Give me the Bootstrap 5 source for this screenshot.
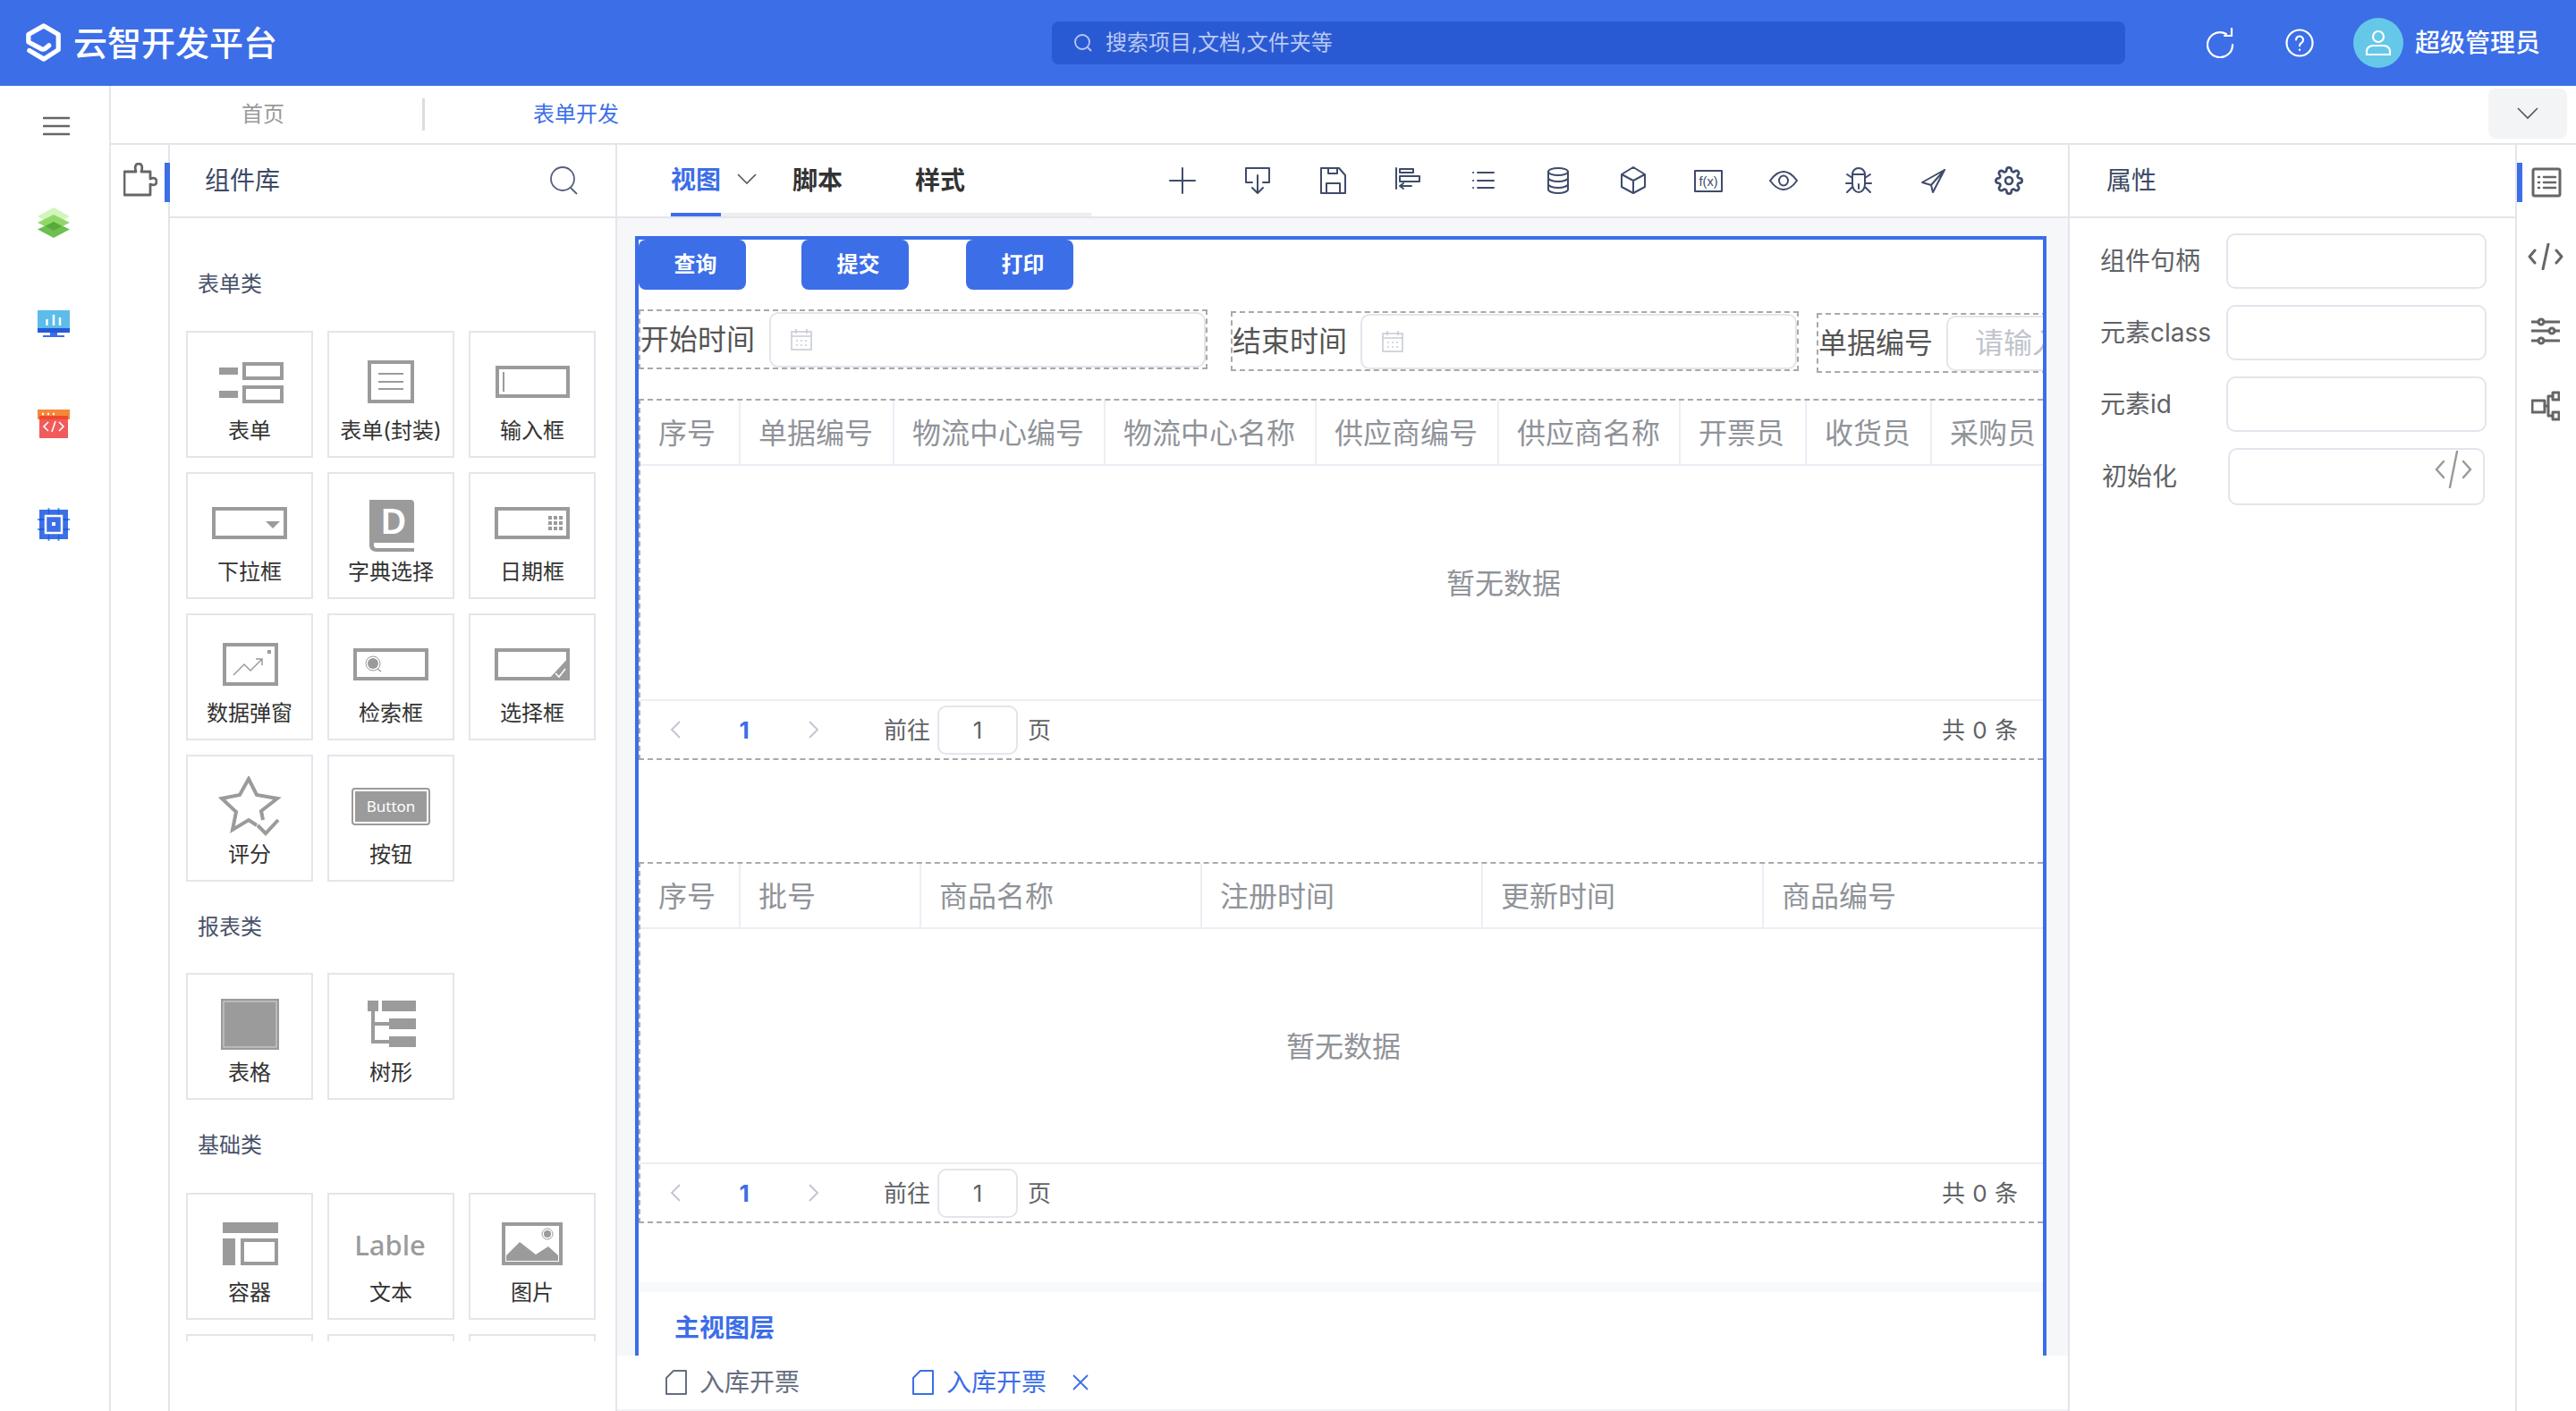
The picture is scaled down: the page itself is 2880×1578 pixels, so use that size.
<!DOCTYPE html>
<html lang="zh-CN">
<head>
<meta charset="utf-8">
<title>云智开发平台</title>
<link href="https://cdn.jsdelivr.net/npm/bootstrap@5.3.0/dist/css/bootstrap.min.css" rel="stylesheet">
<style>
:root{--blue:#3c6ee8;--line:#e4e5ec;--dash:#a9a9a9}
html,body{width:2880px;height:1578px;overflow:hidden}
body{font-family:"Inter","Noto Sans CJK SC",sans-serif;background:#fff;color:#333}
svg{display:block;flex-shrink:0}
.topbar{height:96px;background:var(--blue);color:#fff}
.brand{width:1176px;padding-left:28px}
.brand-txt{font-size:38px;font-weight:500;line-height:44px;margin-left:12px;letter-spacing:0}
.searchbox{width:1200px;height:48px;background:#2a5ad3;border-radius:8px;padding-left:24px;color:#b9c9f2;font-size:24px}
.searchbox span{margin-left:14px}
.top-right{padding-left:91px}
.top-gap{margin-left:56px}
.avatar{width:56px;height:56px;border-radius:50%;background:#65c8e8;margin-left:44px;margin-right:13px}
.uname{font-size:28px;font-weight:500;white-space:nowrap}
.rail{width:124px;border-right:2px solid var(--line);padding-top:34px;padding-left:42px}
.rail svg{margin-bottom:0}
.r1{margin-left:6px}.r2{margin-top:80px}.r3{margin-top:81px}.r4{margin-top:81px}.r5{margin-top:78px}
.tabbar{height:66px;border-bottom:2px solid var(--line);font-size:24px;padding-left:146px;padding-right:10px}
.tab-home{color:#999}
.tab-div{width:3px;height:36px;background:#ddd;margin-left:154px;margin-right:121px}
.tab-cur{color:var(--blue)}
.more-btn{width:88px;height:56px;background:#f3f4f6;border-radius:8px;margin-bottom:2px}
.icon-col{width:66px;border-right:2px solid var(--line);padding-top:20px}
.icon-row{height:44px;width:66px;padding-left:14px;border-right:6px solid var(--blue);margin-right:-2px}
.lib{width:500px;border-right:2px solid var(--line)}
.pane-head{height:82px;border-bottom:2px solid var(--line);font-size:28px;color:#3d4a66;flex-shrink:0}
.lib .pane-head{padding-left:39px;padding-right:42px}
.lib-body{height:1256px;overflow:hidden;padding-left:18px}
.sec-title{font-size:24px;line-height:36px;color:#48526a;padding-left:13px}
.sec-a{margin-top:56px;margin-bottom:34px}
.sec-b{margin-top:33px;margin-bottom:33px}
.sec-c{margin-top:33px;margin-bottom:35px}
.tile-grid{display:grid;grid-template-columns:repeat(3,142px);gap:16px}
.tile{height:142px;border:2px solid var(--line);text-align:center;font-size:24px;line-height:36px;color:#333;overflow:hidden}
.tile svg{margin-top:22px;margin-bottom:2px}
.g{fill:#9b9b9b}
.o{fill:none;stroke:#9b9b9b;stroke-width:4}
.t{fill:none;stroke:#9b9b9b;stroke-width:2}
.workspace{width:1622px}
.toolrow{height:82px;border-bottom:2px solid var(--line);padding-left:60px;padding-right:24px;flex-shrink:0}
.tabtrack{width:470px;height:80px;border-bottom:4px solid #eee;font-size:28px;font-weight:700;color:#333}
.viewtab{width:56px;height:80px;color:var(--blue);border-bottom:4px solid var(--blue);text-align:center;flex-shrink:0}
.viewtab span{display:block;line-height:78px}
.vchev{margin-left:18px;margin-right:40px}
.plain-tab{margin-right:81px;line-height:80px;padding-bottom:4px}
.tool-slot{width:84px;justify-content:center}
.tool-ic{fill:none;stroke:#3f4b6b;stroke-width:2;stroke-linejoin:round;stroke-linecap:round}
.canvas-area{height:1272px;overflow:hidden;background:#f6f7f9;padding:20px 24px 0 20px}
.frame{height:1400px;background:#fff;border:4px solid var(--blue);overflow:hidden}
.act-btn{width:120px;height:56px;padding:0 0 0 7px;background:var(--blue);border:0;border-radius:8px;font-size:24px;font-weight:700;color:#fff;margin-right:62px;flex-shrink:0}
.act-btn:nth-child(2){margin-right:64px}
.field-row{height:122px;padding-top:22px;flex-wrap:nowrap}
.field{height:67px;border:2px dashed var(--dash);flex-shrink:0;font-size:32px;color:#555}
.field label{white-space:nowrap;flex-shrink:0;line-height:40px;padding-left:0}
.f1{width:636px}
.f2{width:635px;margin-left:26px;margin-top:2px}
.f3{width:500px;margin-left:20px;margin-top:4px}
.f-in{height:62px;background:#fff;border:2px solid var(--line);border-radius:10px;padding-left:22px;margin-left:16px;color:#c0c4cc;white-space:nowrap;flex-shrink:0;overflow:hidden}
.f1 .f-in{width:488px;margin-left:16px}
.f2 .f-in{width:488px;margin-left:15px}
.f3 .f-in{width:300px;margin-left:15px;padding-left:30px}
.grid-wrap{border-top:2px dashed var(--dash);border-bottom:2px dashed var(--dash);border-left:2px dashed var(--dash);height:404px;overflow:hidden}
.grid-2{margin-top:114px}
.dtable{table-layout:fixed;margin:0;border-collapse:separate;border-spacing:0;--bs-table-bg:transparent}
.dtable th{height:73px;padding:2px 0 0 20px;font-size:32px;font-weight:400;color:#909399;vertical-align:middle;border-bottom:2px solid #ebeef5;border-right:2px solid #ebeef5;white-space:nowrap;overflow:hidden}
.dtable th:last-child{border-right:0}
.dtable td{height:261px;padding:2px 0 0;font-size:32px;color:#909399;text-align:center;vertical-align:middle;border:0}
.tb1{width:1930px}
.tb1 th:nth-child(1){width:112px}.tb1 th:nth-child(2){width:172px}.tb1 th:nth-child(3),.tb1 th:nth-child(4){width:236px}
.tb1 th:nth-child(5){width:204px}.tb1 th:nth-child(6){width:203px}.tb1 th:nth-child(7){width:141px}.tb1 th:nth-child(8),.tb1 th:nth-child(9){width:140px}
.tb2{width:1568px}
.tb2 td{padding-left:4px}
.tb2 th:nth-child(1){width:112px}.tb2 th:nth-child(2){width:202px}.tb2 th:nth-child(3),.tb2 th:nth-child(4),.tb2 th:nth-child(5){width:314px}
.pager{height:66px;border-top:2px solid #ebeef5;font-size:26px;color:#606266;padding-right:28px}
.p-slot{justify-content:center}
.ps1{width:78px}.ps2{width:76px;color:var(--blue);font-weight:700}.ps3{width:80px}
.pg-txt{margin-left:38px}
.pg-in{width:90px;height:55px;border:2px solid var(--line);border-radius:10px;margin:0 11px 0 8px;text-align:center;line-height:51px}
.pg-total{word-spacing:1px}
.band{height:11px;background:#f8f9fa;margin-top:66px}
.layer-name{font-size:28px;font-weight:700;color:var(--blue);line-height:40px;margin-top:20px;padding-left:40px}
.bottom-tabs{height:62px;background:#fff;border-bottom:2px solid #f2f3f5;padding-left:54px;font-size:28px;color:#666e80;flex-shrink:0}
.bottom-tabs span{margin-left:14px}
.bt-cur{color:var(--blue);margin-left:126px}
.bt-x{margin-left:29px}
.props{width:502px;border-left:2px solid var(--line);border-right:2px solid var(--line)}
.props .pane-head{padding-left:41px}
.prop-body{padding-top:17px;padding-left:34px}
.prop-row{height:62px;margin-bottom:18px;font-size:28px;color:#606266}
.prop-row label{width:141px;flex-shrink:0;white-space:nowrap}
.prop-in{width:291px;height:62px;border:2px solid var(--line);border-radius:10px;padding:0;box-shadow:none}
.prop-last{height:64px;margin-top:0}
.prop-last label{width:143px;padding-left:2px}
.code-box{width:287px;height:64px;border:2px solid var(--line);border-radius:10px;padding:1px 12px 0 0}
.side-tabs{width:66px;padding-top:20px}
.st1{height:44px;border-left:6px solid var(--blue);padding-left:10px}
.st2{margin-top:46px;padding-left:12px}.st3{margin-top:53px;padding-left:16px}.st4{margin-top:50px;padding-left:16px}
.st-ic{fill:none;stroke:#666;stroke-width:3;stroke-linejoin:round;stroke-linecap:round}
</style>
</head>
<body class="d-flex flex-column">
<header class="topbar d-flex align-items-center flex-shrink-0">
  <div class="brand d-flex align-items-center">
    <svg width="42" height="46" viewBox="27 25 44 46" fill="none" stroke="#fff" stroke-width="5.5" stroke-linejoin="round" stroke-linecap="round"><path d="M55 51 L50 55 Q48 56 46 55 L31 47 V38 L49 28 L66 38 V56 L49 67 L32 57"/></svg>
    <span class="brand-txt">云智开发平台</span>
  </div>
  <div class="searchbox d-flex align-items-center">
    <svg width="22" height="22" viewBox="0 0 22 22" fill="none" stroke="#b9c9f2" stroke-width="1.8"><circle cx="10" cy="10" r="8"/><path d="M16 16l4 4"/></svg>
    <span>搜索项目,文档,文件夹等</span>
  </div>
  <div class="top-right d-flex align-items-center">
    <svg width="32" height="34" viewBox="0 0 32 34" fill="none" stroke="#fff" stroke-width="2.2" stroke-linecap="round" stroke-linejoin="round"><path d="M29 19a14 14 0 1 1-7-12"/><path d="M28 1v8h-8"/></svg>
    <svg class="top-gap" width="32" height="32" viewBox="0 0 32 32" fill="none" stroke="#fff" stroke-width="2.2" stroke-linecap="round"><circle cx="16" cy="16" r="14.5"/><path d="M12 12.5a4 4 0 1 1 6 3.5c-1.4.8-2 1.6-2 3.2"/><path d="M16 23.5v.5"/></svg>
    <div class="avatar d-flex align-items-center justify-content-center">
      <svg width="30" height="30" viewBox="0 0 30 30" fill="none" stroke="#fff" stroke-width="2.2"><circle cx="15" cy="8" r="6"/><path d="M2 28v-4c0-3 3-6 7-6h12c4 0 7 3 7 6v4z"/></svg>
    </div>
    <span class="uname">超级管理员</span>
  </div>
</header>

<div class="d-flex flex-grow-1 overflow-hidden">
  <nav class="rail d-flex flex-column flex-shrink-0">
    <svg class="r1" width="30" height="22" viewBox="0 0 30 22" stroke="#666" stroke-width="2.6" stroke-linecap="round"><path d="M1 2h28M1 11h28M1 20h28"/></svg>
    <svg class="r2" width="36" height="34" viewBox="0 0 36 34"><polygon points="18,0 36,10 18,20 0,10" fill="#d3f5bd"/><polygon points="18,8 36,17 18,26 0,17" fill="#90d76a"/><polygon points="18,16 36,24.5 18,34 0,24.5" fill="#6cc04f"/><polygon points="18,16 27,21 18,26 9,21" fill="#5aa83d"/></svg>
    <svg class="r3" width="36" height="30" viewBox="0 0 36 30"><rect width="36" height="20" fill="#5dbcea"/><rect y="20" width="36" height="5" fill="#2459d9"/><rect x="14" y="25" width="8" height="3" fill="#3c6ee8"/><rect x="6" y="28" width="24" height="2" fill="#3c6ee8"/><path d="M10.5 17v-7M18 17V5M25 17V8" stroke="#fff" stroke-width="2.5"/></svg>
    <svg class="r4" width="36" height="32" viewBox="0 0 36 32"><rect width="36" height="11" fill="#f4883a"/><rect x="2" y="7" width="32" height="25" fill="#f15b5b"/><rect x="2" y="7" width="32" height="4" fill="#f0472c"/><path d="M5 5h2M11 5h2M17 5h2" stroke="#fff" stroke-width="2.4"/><path d="M12 14l-5 5 5 5M24 14l5 5-5 5M20 13l-4 12" fill="none" stroke="#fff" stroke-width="1.6"/></svg>
    <svg class="r5" width="36" height="37" viewBox="0 0 36 37"><rect x="2" y="2" width="32" height="33" fill="#3c6ee8"/><path d="M12.500 0v37M23.500 0v37M0 13h36M0 24h36" stroke="#3fa4ee" stroke-width="2"/><path d="M12.500 2v33M23.500 2v33M2 13h32M2 24h32" stroke="#2459d9" stroke-width="2"/><rect x="9" y="9" width="18" height="19" fill="#3c6ee8" stroke="#fff" stroke-width="2.5"/><rect x="16" y="16" width="4" height="4" fill="#fff"/></svg>
  </nav>

  <div class="d-flex flex-column flex-grow-1">
    <div class="tabbar d-flex align-items-center flex-shrink-0">
      <span class="tab-home">首页</span>
      <i class="tab-div"></i>
      <span class="tab-cur">表单开发</span>
      <button class="more-btn btn ms-auto d-flex align-items-center justify-content-center" type="button" aria-label="更多">
        <svg width="24" height="14" viewBox="0 0 24 14" fill="none" stroke="#555" stroke-width="1.6"><path d="M1 1l11 11L23 1"/></svg>
      </button>
    </div>

    <div class="d-flex flex-grow-1">
      <div class="icon-col flex-shrink-0">
        <div class="icon-row d-flex align-items-start">
          <svg width="38" height="38" viewBox="0 0 38 38" fill="none" stroke="#666" stroke-width="2.8" stroke-linejoin="round"><path d="M1 10h13c-2-6 0-9 3-9s5 3 3 9h10v8c5-2 7 0 7 3s-2 5-7 3v12H1z"/></svg>
        </div>
      </div>

      <aside class="lib d-flex flex-column flex-shrink-0">
        <div class="pane-head d-flex align-items-center justify-content-between">
          <span>组件库</span>
          <svg width="32" height="32" viewBox="0 0 32 32" fill="none" stroke="#56607a" stroke-width="1.8"><circle cx="15" cy="14" r="13"/><path d="M24 24l7 7"/></svg>
        </div>
        <div class="lib-body">
          <div class="sec-title sec-a">表单类</div>
          <div class="tile-grid">
            <div class="tile"><svg width="138" height="68" viewBox="0 0 138 68"><rect class="g" x="35" y="17" width="21" height="8"/><rect class="g" x="35" y="43" width="21" height="8"/><rect class="o" x="63" y="13" width="42" height="16"/><rect class="o" x="63" y="39" width="42" height="16"/></svg>表单</div>
            <div class="tile"><svg width="138" height="68" viewBox="0 0 138 68"><rect class="o" x="45" y="11" width="48" height="44"/><path class="t" d="M55 24h28M55 33h28M55 41h28"/></svg>表单(封装)</div>
            <div class="tile"><svg width="138" height="68" viewBox="0 0 138 68"><rect class="o" x="30" y="17" width="79" height="32"/><path class="t" d="M37 22v22"/></svg>输入框</div>

            <div class="tile"><svg width="138" height="68" viewBox="0 0 138 68"><rect class="o" x="29" y="17" width="80" height="32"/><polygon class="g" points="87,31 103,31 95,39"/></svg>下拉框</div>
            <div class="tile"><svg width="138" height="68" viewBox="0 0 138 68"><path class="g" d="M45 7h46a4 4 0 0 1 4 4v44H50v3c0 1 1 3 3 3h42v4H53c-5 0-8-3-8-7z"/><text x="72" y="45" text-anchor="middle" font-family="Noto Sans,sans-serif" font-weight="600" font-size="40" fill="#fff">D</text></svg>字典选择</div>
            <div class="tile"><svg width="138" height="68" viewBox="0 0 138 68"><rect class="o" x="29" y="17" width="80" height="32"/><path d="M87 27h4M93 27h4M99 27h4M87 33h4M93 33h4M99 33h4M87 39h4M93 39h4M99 39h4" stroke="#9b9b9b" stroke-width="4"/></svg>日期框</div>

            <div class="tile"><svg width="138" height="68" viewBox="0 0 138 68"><rect class="o" x="41" y="11" width="58" height="44"/><rect class="g" x="89" y="17" width="4" height="4"/><path fill="none" stroke="#9b9b9b" stroke-width="1.5" d="M51 45l12-12 7 7 13-13M76 27h7v7"/></svg>数据弹窗</div>
            <div class="tile"><svg width="138" height="68" viewBox="0 0 138 68"><rect class="o" x="29" y="17" width="80" height="32"/><circle cx="49" cy="32" r="8" fill="none" stroke="#9b9b9b" stroke-width="1"/><circle class="g" cx="49" cy="32" r="6"/><path stroke="#9b9b9b" stroke-width="1.5" d="M54 38l4 3"/></svg>检索框</div>
            <div class="tile"><svg width="138" height="68" viewBox="0 0 138 68"><rect class="o" x="29" y="17" width="80" height="32"/><polygon class="g" points="86,51 111,51 111,24"/><path d="M95 43l4 4 7-9" fill="none" stroke="#fff" stroke-width="1.6"/></svg>选择框</div>

            <div class="tile"><svg width="138" height="68" viewBox="0 0 138 68"><path class="o" d="M84 49l-2-10 18-14-23-4-9-18-10 18-20 4 16 15-4 20 18-11 9 6"/><path class="o" d="M78 55l9 9 14-15"/></svg>评分</div>
            <div class="tile"><svg width="138" height="68" viewBox="0 0 138 68"><rect x="26" y="14" width="86" height="40" rx="3" fill="none" stroke="#9b9b9b" stroke-width="2"/><rect class="g" x="29" y="17" width="80" height="34"/><text x="69" y="40" text-anchor="middle" font-family="Noto Sans,sans-serif" font-size="17" fill="#fff">Button</text></svg>按钮</div>
          </div>

          <div class="sec-title sec-b">报表类</div>
          <div class="tile-grid">
            <div class="tile"><svg width="138" height="68" viewBox="0 0 138 68"><rect class="g" x="37" y="5" width="65" height="57"/><rect x="40" y="8" width="59" height="51" fill="none" stroke="#e6e6e6" stroke-width=".8"/></svg>表格</div>
            <div class="tile"><svg width="138" height="68" viewBox="0 0 138 68"><rect class="g" x="43" y="7" width="12" height="12"/><rect class="g" x="59" y="7" width="38" height="12"/><rect class="g" x="67" y="27" width="30" height="12"/><rect class="g" x="67" y="47" width="30" height="12"/><path class="o" d="M49 19v34h18M49 33h18"/></svg>树形</div>
          </div>

          <div class="sec-title sec-c">基础类</div>
          <div class="tile-grid">
            <div class="tile"><svg width="138" height="68" viewBox="0 0 138 68"><rect class="g" x="39" y="9" width="62" height="12"/><rect class="g" x="39" y="27" width="14" height="30"/><rect class="o" x="61" y="29" width="38" height="26"/></svg>容器</div>
            <div class="tile"><svg width="138" height="68" viewBox="0 0 138 68"><text x="68" y="46" text-anchor="middle" font-family="Noto Sans,sans-serif" font-weight="500" font-size="31" fill="#9b9b9b">Lable</text></svg>文本</div>
            <div class="tile"><svg width="138" height="68" viewBox="0 0 138 68"><rect class="o" x="37" y="11" width="64" height="44"/><path class="g" d="M40 52v-6l15-15 18 14 14-9 11 10v6z"/><circle cx="86" cy="22" r="6" fill="none" stroke="#9b9b9b" stroke-width="1"/><circle class="g" cx="86" cy="22" r="4"/></svg>图片</div>
            <div class="tile"></div><div class="tile"></div><div class="tile"></div>
          </div>
        </div>
      </aside>

      <main class="workspace d-flex flex-column flex-shrink-0">
        <div class="toolrow d-flex align-items-start">
          <div class="tabtrack d-flex align-items-start flex-shrink-0">
            <div class="viewtab"><span>视图</span></div>
            <svg class="vchev align-self-center" width="22" height="12" viewBox="0 0 22 12" fill="none" stroke="#555" stroke-width="1.6"><path d="M1 1l10 10L21 1"/></svg>
            <div class="plain-tab">脚本</div>
            <div class="plain-tab">样式</div>
          </div>
          <div class="d-flex ms-auto h-100 align-items-center">
            <div class="d-flex tool-slot"><svg class="tool-ic" width="32" height="32" viewBox="0 0 32 32"><path d="M2 16h28M16 2v28"/></svg></div>
            <div class="d-flex tool-slot"><svg class="tool-ic" width="32" height="32" viewBox="0 0 32 32"><path d="M10 18H3V2h26v16h-7M16 10v20M10 24l6 6 6-6"/></svg></div>
            <div class="d-flex tool-slot"><svg class="tool-ic" width="32" height="32" viewBox="0 0 32 32"><path d="M3 2h20l7 8v20H3zM11 2v6h10V2M9 30V19h15v11"/></svg></div>
            <div class="d-flex tool-slot"><svg class="tool-ic" width="32" height="32" viewBox="0 0 32 32"><path d="M3 2v23M7 3h15v4H7zM7 11h22v6H7zM20 22H7M11 19l-4 3 4 3"/></svg></div>
            <div class="d-flex tool-slot"><svg class="tool-ic" width="32" height="32" viewBox="0 0 32 32"><path d="M10 7h18M10 16h18M10 24h18M5 7h.2M5 16h.2M5 24h.2"/></svg></div>
            <div class="d-flex tool-slot"><svg class="tool-ic" width="32" height="32" viewBox="0 0 32 32"><ellipse cx="16" cy="6" rx="11" ry="4"/><path d="M5 6v20c0 2 5 4 11 4s11-2 11-4V6M5 13c0 2 5 4 11 4s11-2 11-4M5 20c0 2 5 4 11 4s11-2 11-4"/></svg></div>
            <div class="d-flex tool-slot"><svg class="tool-ic" width="32" height="32" viewBox="0 0 32 32"><path d="M16 1l13 8v14l-13 7-13-7V9zM3 9l13 7 13-7M16 16v14"/></svg></div>
            <div class="d-flex tool-slot"><svg class="tool-ic" width="32" height="32" viewBox="0 0 32 32"><rect x="1" y="5" width="30" height="23"/><text x="16" y="22" text-anchor="middle" font-family="Liberation Sans Narrow,Liberation Sans,sans-serif" font-size="15" fill="#3f4b6b" stroke="none" textLength="21" lengthAdjust="spacingAndGlyphs">f(x)</text></svg></div>
            <div class="d-flex tool-slot"><svg class="tool-ic" width="32" height="32" viewBox="0 0 32 32"><path d="M1 16C6 9 10 6 16 6s10 3 15 10c-5 7-9 10-15 10S6 23 1 16z"/><ellipse cx="16" cy="16" rx="5" ry="5.500"/></svg></div>
            <div class="d-flex tool-slot"><svg class="tool-ic" width="32" height="32" viewBox="0 0 32 32"><path d="M9 9c0-4 3-7 7-7s7 3 7 7zM9 9v11c0 5 3 9 7 9s7-4 7-9V9M9 13L3 9M9 19H2M9 23l-6 6M23 13l6-4M23 19h7M23 23l6 6M16 20v5"/></svg></div>
            <div class="d-flex tool-slot"><svg class="tool-ic" width="32" height="32" viewBox="0 0 32 32"><path d="M28 4L3 18l10 3 2 8zM28 4L13 21"/></svg></div>
            <div class="d-flex tool-slot"><svg class="tool-ic" width="32" height="32" viewBox="0 0 24 24" stroke-width="1.500"><circle cx="12" cy="12" r="3"/><path d="M19.400 15a1.650 1.650 0 0 0 .33 1.820l.06.06a2 2 0 0 1 0 2.830 2 2 0 0 1-2.830 0l-.06-.06a1.650 1.650 0 0 0-1.820-.33 1.650 1.650 0 0 0-1 1.510V21a2 2 0 0 1-2 2 2 2 0 0 1-2-2v-.09A1.650 1.650 0 0 0 9 19.400a1.650 1.650 0 0 0-1.820.33l-.06.06a2 2 0 0 1-2.830 0 2 2 0 0 1 0-2.830l.06-.06a1.650 1.650 0 0 0 .33-1.820 1.650 1.650 0 0 0-1.510-1H3a2 2 0 0 1-2-2 2 2 0 0 1 2-2h.09A1.650 1.650 0 0 0 4.600 9a1.650 1.650 0 0 0-.33-1.820l-.06-.06a2 2 0 0 1 0-2.830 2 2 0 0 1 2.830 0l.06.06a1.650 1.650 0 0 0 1.820.33H9a1.650 1.650 0 0 0 1-1.510V3a2 2 0 0 1 2-2 2 2 0 0 1 2 2v.09a1.650 1.650 0 0 0 1 1.510 1.650 1.650 0 0 0 1.820-.33l.06-.06a2 2 0 0 1 2.830 0 2 2 0 0 1 0 2.830l-.06.06a1.650 1.650 0 0 0-.33 1.820V9a1.650 1.650 0 0 0 1.510 1H21a2 2 0 0 1 2 2 2 2 0 0 1-2 2h-.09a1.650 1.650 0 0 0-1.510 1z"/></svg></div>
          </div>
        </div>

        <div class="canvas-area flex-shrink-0">
          <div class="frame">
            <div class="d-flex">
              <button class="btn act-btn" type="button">查询</button>
              <button class="btn act-btn" type="button">提交</button>
              <button class="btn act-btn" type="button">打印</button>
            </div>
            <div class="field-row d-flex align-items-start">
              <div class="field f1 d-flex align-items-center">
                <label>开始时间</label>
                <div class="f-in d-flex align-items-center"><svg width="24" height="24" viewBox="0 0 24 24" fill="none" stroke="#c9ccd6" stroke-width="1.6"><rect x="1" y="3" width="22" height="20"/><path d="M1 8h22M6 0v5M18 0v5M6 13h2M11 13h2M16 13h2M6 18h2M11 18h2M16 18h2"/></svg></div>
              </div>
              <div class="field f2 d-flex align-items-center">
                <label>结束时间</label>
                <div class="f-in d-flex align-items-center"><svg width="24" height="24" viewBox="0 0 24 24" fill="none" stroke="#c9ccd6" stroke-width="1.6"><rect x="1" y="3" width="22" height="20"/><path d="M1 8h22M6 0v5M18 0v5M6 13h2M11 13h2M16 13h2M6 18h2M11 18h2M16 18h2"/></svg></div>
              </div>
              <div class="field f3 d-flex align-items-center">
                <label>单据编号</label>
                <div class="f-in d-flex align-items-center">请输入</div>
              </div>
            </div>

            <div class="grid-wrap">
              <table class="table dtable tb1">
                <thead><tr><th>序号</th><th>单据编号</th><th>物流中心编号</th><th>物流中心名称</th><th>供应商编号</th><th>供应商名称</th><th>开票员</th><th>收货员</th><th>采购员</th><th></th></tr></thead>
                <tbody><tr><td colspan="10">暂无数据</td></tr></tbody>
              </table>
              <div class="pager d-flex align-items-center">
                <div class="d-flex p-slot ps1"><svg width="12" height="20" viewBox="0 0 12 20" fill="none" stroke="#c0c4cc" stroke-width="1.800"><path d="M11 1L2 10l9 9"/></svg></div>
                <div class="d-flex p-slot ps2">1</div>
                <div class="d-flex p-slot ps3"><svg width="12" height="20" viewBox="0 0 12 20" fill="none" stroke="#c0c4cc" stroke-width="1.800"><path d="M1 1l9 9-9 9"/></svg></div>
                <span class="pg-txt">前往</span><div class="pg-in">1</div><span>页</span>
                <span class="ms-auto pg-total">共 0 条</span>
              </div>
            </div>

            <div class="grid-wrap grid-2">
              <table class="table dtable tb2">
                <thead><tr><th>序号</th><th>批号</th><th>商品名称</th><th>注册时间</th><th>更新时间</th><th>商品编号</th></tr></thead>
                <tbody><tr><td colspan="6">暂无数据</td></tr></tbody>
              </table>
              <div class="pager d-flex align-items-center">
                <div class="d-flex p-slot ps1"><svg width="12" height="20" viewBox="0 0 12 20" fill="none" stroke="#c0c4cc" stroke-width="1.800"><path d="M11 1L2 10l9 9"/></svg></div>
                <div class="d-flex p-slot ps2">1</div>
                <div class="d-flex p-slot ps3"><svg width="12" height="20" viewBox="0 0 12 20" fill="none" stroke="#c0c4cc" stroke-width="1.800"><path d="M1 1l9 9-9 9"/></svg></div>
                <span class="pg-txt">前往</span><div class="pg-in">1</div><span>页</span>
                <span class="ms-auto pg-total">共 0 条</span>
              </div>
            </div>

            <div class="band"></div>
            <div class="layer-name">主视图层</div>
          </div>
        </div>

        <div class="bottom-tabs d-flex align-items-center">
          <svg width="24" height="28" viewBox="0 0 24 28" fill="none" stroke="#666e80" stroke-width="2" stroke-linejoin="round"><path d="M9 1h14v26H1V9z"/></svg><span>入库开票</span>
          <svg class="bt-cur" width="24" height="28" viewBox="0 0 24 28" fill="none" stroke="#3c6ee8" stroke-width="2" stroke-linejoin="round"><path d="M9 1h14v26H1V9z"/></svg><span class="tab-cur">入库开票</span>
          <svg class="bt-x" width="18" height="18" viewBox="0 0 18 18" stroke="#3c6ee8" stroke-width="1.800"><path d="M1 1l16 16M17 1L1 17"/></svg>
        </div>
      </main>

      <section class="props d-flex flex-column flex-shrink-0">
        <div class="pane-head d-flex align-items-center"><span>属性</span></div>
        <div class="prop-body">
          <div class="prop-row d-flex align-items-center"><label>组件句柄</label><input class="form-control prop-in" type="text" aria-label="组件句柄"></div>
          <div class="prop-row d-flex align-items-center"><label>元素class</label><input class="form-control prop-in" type="text" aria-label="元素class"></div>
          <div class="prop-row d-flex align-items-center"><label>元素id</label><input class="form-control prop-in" type="text" aria-label="元素id"></div>
          <div class="prop-row prop-last d-flex align-items-center"><label>初始化</label>
            <div class="code-box d-flex justify-content-end"><svg width="42" height="42" viewBox="0 0 42 42" fill="none" stroke="#999" stroke-width="2.400" stroke-linecap="round"><path d="M10 12L2 21l8 9M32 12l8 9-8 9M25 1l-8 40"/></svg></div>
          </div>
        </div>
      </section>

      <div class="side-tabs flex-shrink-0">
        <div class="st1 d-flex align-items-center">
          <svg class="st-ic" width="34" height="34" viewBox="0 0 34 34"><rect x="2" y="2" width="30" height="30" rx="2"/><path d="M14 11h13M14 17h13M14 23h13M8 11h1M8 17h1M8 23h1" stroke-width="2.600"/></svg>
        </div>
        <svg class="st-ic st2" width="52" height="30" viewBox="0 0 40 30"><path d="M8 8l-6 7 6 7M32 8l6 7-6 7M23 1l-6 28"/></svg>
        <svg class="st-ic st3" width="48" height="32" viewBox="0 0 32 32" stroke-width="2.200"><path d="M0 5h8M14 5h18M0 15h20M26 15h6M0 26h8M14 26h18"/><circle cx="11" cy="5" r="3"/><circle cx="23" cy="15" r="3"/><circle cx="11" cy="26" r="3"/></svg>
        <svg class="st-ic st4" width="48" height="34" viewBox="0 0 32 34" stroke-width="2.600"><rect x="1" y="11" width="14" height="13"/><rect x="24" y="2" width="7" height="8"/><rect x="24" y="24" width="7" height="8"/><path d="M15 17h4V6h5M19 17v11h5"/></svg>
      </div>
    </div>
  </div>
</div>
</body>
</html>
